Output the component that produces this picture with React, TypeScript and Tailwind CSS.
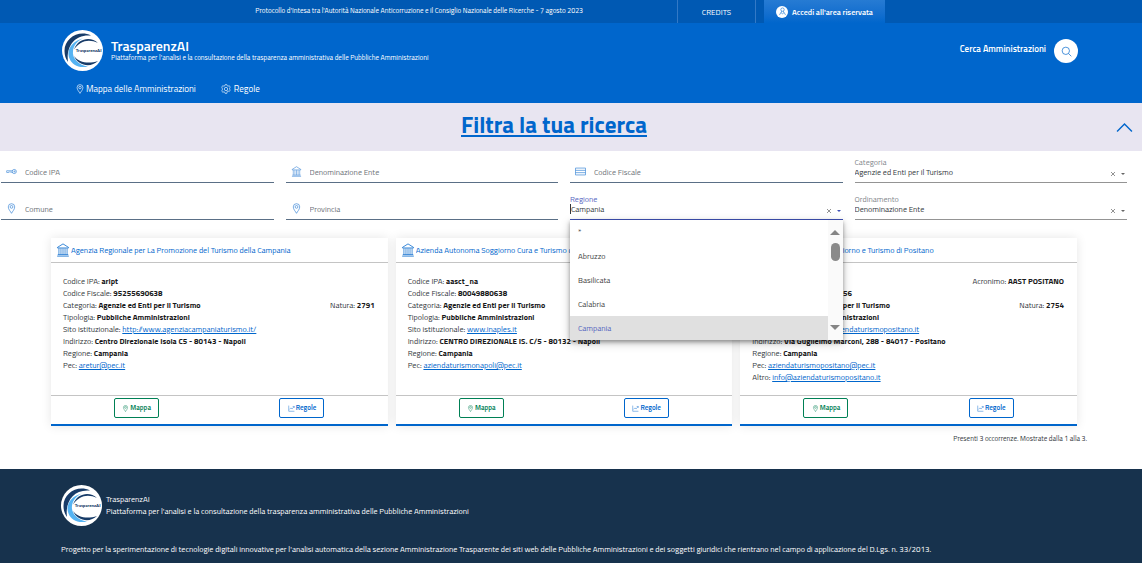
import { useState } from "react";

const filters = [
  { id: "ipa", label: "Codice IPA", icon: "key" },
  { id: "denominazione", label: "Denominazione Ente", icon: "pa" },
  { id: "fiscale", label: "Codice Fiscale", icon: "card" },
];

const places = [
  { id: "comune", label: "Comune", icon: "pin" },
  { id: "provincia", label: "Provincia", icon: "pin" },
];

const regions = ["*", "Abruzzo", "Basilicata", "Calabria", "Campania"];

const agencies = [
  {
    name: "Agenzia Regionale per La Promozione del Turismo della Campania",
    ipa: "arlpt",
    fiscale: "95255690638",
    natura: "2791",
    site: "http://www.agenziacampaniaturismo.it/",
    address: "Centro Direzionale Isola C5 - 80143 - Napoli",
    pec: "aretur@pec.it",
  },
  {
    name: "Azienda Autonoma Soggiorno Cura e Turismo di Napoli",
    ipa: "aasct_na",
    fiscale: "80049880638",
    natura: "2754",
    site: "www.inaples.it",
    address: "CENTRO DIREZIONALE IS. C/5 - 80132 - Napoli",
    pec: "aziendaturismonapoli@pec.it",
  },
  {
    name: "Azienda Autonoma Soggiorno e Turismo di Positano",
    ipa: "aast_po",
    acronym: "AAST POSITANO",
    fiscale: "80020640656",
    natura: "2754",
    site: "www.aziendaturismopositano.it",
    address: "Via Guglielmo Marconi, 288 - 84017 - Positano",
    pec: "aziendaturismopositano@pec.it",
    other: "info@aziendaturismopositano.it",
  },
];

const Icon = ({ name, className }: { name: string; className?: string }) => (
  <svg
    viewBox="0 0 24 24"
    fill="none"
    stroke="currentColor"
    strokeWidth="1.5"
    className={className}
    aria-hidden="true"
  >
    {name === "pin" && (
      <>
        <path d="M12 22.5C10 18.5 5 14 5 8.5a7 7 0 0 1 14 0C19 14 14 18.5 12 22.5z" />
        <circle cx="12" cy="8.5" r="3" />
      </>
    )}
    {name === "pa" && (
      <>
        <path d="M2.5 7.5 12 1.5l9.5 6v1h-19zM2 22.5h20M3 20h18" strokeWidth="1.3" />
        <path d="M5 9v11M8.5 9v11M12 9v11M15.5 9v11M19 9v11" strokeWidth="1.2" />
      </>
    )}
    {name === "card" && <path d="M1 4.5h22v15H1zM1 9.5h22M1 14.5h22" />}
    {name === "key" && (
      <>
        <path d="M14 10.5H4a2 2 0 1 0 0 3.5h2l1.5-1.5L9 14l1.5-1.5L12 14h2" />
        <circle cx="18" cy="12" r="4.5" />
        <circle cx="18.5" cy="12" r="1.2" />
      </>
    )}
    {name === "gear" && (
      <>
        <path d="M10 1.5h4l.8 2.8 2.3 1 2.7-1.400 2.3 3.600-1.500 2.300v2.400l1.500 2.300-2.300 3.700-2.700-1.400-2.300 1L14 22.500h-4l-.8-2.800-2.300-1-2.700 1.400-2.300-3.700 1.500-2.300v-2.400L1.900 7.500l2.300-3.600 2.700 1.400 2.300-1z" />
        <circle cx="12" cy="12" r="4" />
      </>
    )}
    {name === "chart" && <path d="M2.5 2v19.5H22M5 15l5-5 4 3.5 7-8M16 5h5.500v5" />}
    {name === "search" && (
      <>
        <circle cx="10.5" cy="10.5" r="8" />
        <path d="m16.5 16.5 6 6" />
      </>
    )}
    {name === "user" && (
      <>
        <circle cx="12" cy="7" r="4.5" />
        <path d="M10 11 4 21M14 11l6 10M8 15l4 3 4-3" />
      </>
    )}
    {name === "up" && <path d="m1.5 17.5 10.5-10.5 10.5 10.5" strokeWidth="2" />}
  </svg>
);

const Logo = () => (
  <svg viewBox="0 0 41 41" className="size-[41px] shrink-0" aria-hidden="true">
    <circle cx="20.5" cy="20.5" r="20.5" fill="#fff" />
    <path d="M29 5.5C17-.5 2.5 8 2.5 21c0 4 1.2 8 3.500 11C4 17 12 4 29 5.500z" fill="#173b68" />
    <path d="M21 8.5C10 11 4 20 7.500 28.500 10 35 17 38.500 26 36.500 16 35 10 28 11 21c.5-5 4-10 10-12.500z" fill="#55b3f2" />
    <path d="M36 13C29 6 16 8 12 19.5 18 10.500 27 8.500 36 13z" fill="#173b68" />
    <path d="M12 26c4 10 17 12 24 5-9 3-19 2-24-5z" fill="#173b68" />
    <text x="39.5" y="22" textAnchor="end" fontSize="4.4" fontWeight="900" fill="#173b68" fontFamily="Lato, sans-serif">
      TrasparenzAI
    </text>
  </svg>
);

const TextFilter = ({ id, label, icon }: { id: string; label: string; icon: string }) => (
  <div className="flex h-8 items-center gap-2 border-b border-[#5a6f86] px-[5px] pt-[10px]">
    <Icon name={icon} className="size-[11px] shrink-0 text-[#3b86d6]" />
    <input
      id={id}
      aria-label={label}
      placeholder={label}
      className="w-full min-w-0 outline-none placeholder:text-[#6d7278]"
    />
  </div>
);

const SelectFilter = ({ id, label, value }: { id: string; label: string; value: string }) => (
  <div className="relative h-8 border-b border-[#949494] pt-[6px]">
    <label htmlFor={id} className="block leading-[10px] text-[#83878c]">
      {label}
    </label>
    <select id={id} className="block w-full appearance-none leading-[10px] text-[#33383d] outline-none">
      <option>{value}</option>
    </select>
    <FieldMarks />
  </div>
);

const FieldMarks = ({ active }: { active?: boolean }) => (
  <span className="absolute right-[2px] bottom-[6px] flex items-center gap-[6px]">
    <button type="button" aria-label="Cancella" className="text-[#777]">
      <svg viewBox="0 0 4 4" className="block size-1" stroke="currentColor" strokeWidth=".8">
        <path d="m0 0 4 4M4 0 0 4" />
      </svg>
    </button>
    <svg viewBox="0 0 4 2" className={active ? "h-[2px] w-1 text-[#3f51b5]" : "h-[2px] w-1 text-[#666]"} fill="currentColor">
      <path d="M0 0h4L2 2z" />
    </svg>
  </span>
);

const RegionFilter = () => {
  const [value, setValue] = useState("Campania");

  return (
    <div className="relative h-8 border-b border-[#3f51b5] pt-[6px]">
      <label htmlFor="regione" className="block leading-[10px] text-[#5566bf]">
        Regione
      </label>
      <input
        id="regione"
        role="combobox"
        aria-expanded="true"
        aria-controls="regione-list"
        value={value}
        onChange={(e) => setValue(e.target.value)}
        className="block h-[10px] w-full border-l border-[#33383d] text-[#33383d] outline-none"
      />
      <FieldMarks active />
      <div className="absolute top-8 right-0 left-0 z-10 flex h-[120px] bg-white shadow-[0_2px_4px_rgba(0,0,0,.35),0_3px_10px_rgba(0,0,0,.2)]">
        <ul id="regione-list" role="listbox" aria-label="Regione" className="flex-1">
          {regions.map((region) => (
            <li
              key={region}
              role="option"
              aria-selected={region === value}
              onClick={() => setValue(region)}
              className={
                region === value
                  ? "bg-[#e0e0e0] px-2 leading-6 text-[#5566bf]"
                  : "px-2 leading-6 text-[#444]"
              }
            >
              {region}
            </li>
          ))}
        </ul>
        <div className="flex w-[15px] flex-col items-center bg-[#fafafa] py-[10px]">
          <svg viewBox="0 0 10 5" className="h-[5px] w-[10px]" fill="#858585">
            <path d="M5 0 10 5H0z" />
          </svg>
          <div className="mt-2 h-[18px] w-[9px] rounded-full bg-[#8a8a8a]" />
          <svg viewBox="0 0 10 5" className="mt-auto h-[5px] w-[10px]" fill="#858585">
            <path d="M0 0h10L5 5z" />
          </svg>
        </div>
      </div>
    </div>
  );
};

const Row = ({ label, value }: { label: string; value: string }) => (
  <p>
    {label}: <strong className="font-bold text-[#19191a]">{value}</strong>
  </p>
);

const LinkRow = ({ label, value }: { label: string; value: string }) => (
  <p>
    {label}:{" "}
    <a href="#" className="text-[#0066cc] underline">
      {value}
    </a>
  </p>
);

const AgencyCard = ({ agency }: { agency: (typeof agencies)[number] }) => (
  <article className="flex flex-col border-b-2 border-[#0066cc] bg-white shadow-[0_0_10px_rgba(0,0,0,.1)]">
    <h3 className="flex h-[25px] items-center gap-px border-b border-[#c4c4c4] px-[5px] text-[#0066cc]">
      <Icon name="pa" className="size-[14px] shrink-0" />
      <a href="#" className="truncate">{agency.name}</a>
    </h3>
    <div className="min-h-[132px] flex-1 px-3 py-3 leading-3 text-[#33383d]">
      <div className="flex justify-between pr-px">
        <Row label="Codice IPA" value={agency.ipa} />
        {agency.acronym && <Row label="Acronimo" value={agency.acronym} />}
      </div>
      <Row label="Codice Fiscale" value={agency.fiscale} />
      <div className="flex justify-between pr-px">
        <Row label="Categoria" value="Agenzie ed Enti per il Turismo" />
        <Row label="Natura" value={agency.natura} />
      </div>
      <Row label="Tipologia" value="Pubbliche Amministrazioni" />
      <LinkRow label="Sito istituzionale" value={agency.site} />
      <Row label="Indirizzo" value={agency.address} />
      <Row label="Regione" value="Campania" />
      <LinkRow label="Pec" value={agency.pec} />
      {agency.other && <LinkRow label="Altro" value={agency.other} />}
    </div>
    <div className="grid grid-cols-2 justify-items-center border-t border-[#c4c4c4] px-[3px] pt-[2px] pb-[6px] text-[7px] font-semibold">
      <button type="button" className="flex h-5 w-[45px] items-center justify-center gap-px rounded-[2px] border border-[#008055] text-[#008055]">
        <Icon name="pin" className="size-[7px]" />
        Mappa
      </button>
      <button type="button" className="flex h-5 w-[45px] items-center justify-center gap-px rounded-[2px] border border-[#0066cc] text-[#0066cc]">
        <Icon name="chart" className="size-[7px]" />
        Regole
      </button>
    </div>
  </article>
);

export default function App() {
  return (
    <div className="flex min-h-screen flex-col bg-white font-['Titillium_Web','Lato',sans-serif] text-[8px]">
      <header className="bg-[#0066cc] text-white">
        <div className="flex h-[23px] justify-end bg-[#0059b3] pr-[257px]">
          <p className="mr-[94px] self-center text-[7px]">
            Protocollo d'Intesa tra l'Autorità Nazionale Anticorruzione e il Consiglio Nazionale delle Ricerche - 7 agosto 2023
          </p>
          <a href="#" className="flex w-[79px] items-center justify-center border-x border-[#3379c6]">
            CREDITS
          </a>
          <a href="#" className="ml-2 flex w-[121px] items-center justify-center gap-1 bg-linear-to-b from-[#267bd3] to-[#0066cc] font-semibold">
            <span className="flex size-3 items-center justify-center rounded-full bg-white">
              <Icon name="user" className="size-[9px] text-[#0066cc]" />
            </span>
            Accedi all'area riservata
          </a>
        </div>
        <div className="flex h-[54px] items-center justify-between pr-16 pl-[62px]">
          <div className="flex items-center gap-2">
            <Logo />
            <div>
              <h1 className="text-[14px] leading-4 font-semibold">TrasparenzAI</h1>
              <p className="text-[7px] leading-[8px]">
                Piattaforma per l'analisi e la consultazione della trasparenza amministrativa delle Pubbliche Amministrazioni
              </p>
            </div>
          </div>
          <div className="flex items-center gap-2 pt-[2px] text-[9px] font-semibold">
            <span className="pb-1">Cerca Amministrazioni</span>
            <button type="button" aria-label="Cerca" className="flex size-6 items-center justify-center rounded-full bg-white text-[#0066cc]">
              <Icon name="search" className="size-[11px]" />
            </button>
          </div>
        </div>
        <nav className="flex h-[26px] gap-[25px] pt-1 pb-[6px] pl-[75px] text-[9px] leading-3">
          <a href="#" className="flex items-center gap-px">
            <Icon name="pin" className="size-[10px]" />
            Mappa delle Amministrazioni
          </a>
          <a href="#" className="flex items-center gap-[3px]">
            <Icon name="gear" className="size-[10px]" />
            Regole
          </a>
        </nav>
      </header>

      <div className="flex h-12 items-center bg-[#e8e5f1] text-[#0066cc]">
        <h2 className="flex-1 pr-2 pb-[3px] text-center text-[23px] font-bold">
          <a href="#filtri" className="underline decoration-2 underline-offset-2">Filtra la tua ricerca</a>
        </h2>
        <button type="button" aria-label="Chiudi filtri" className="mr-[9px]">
          <Icon name="up" className="size-[17px]" />
        </button>
      </div>

      <main className="pr-[15px]">
        <form id="filtri" className="grid grid-cols-4 gap-x-3 gap-y-[5px] pl-px">
          {filters.map((filter) => (
            <TextFilter key={filter.id} {...filter} />
          ))}
          <SelectFilter id="categoria" label="Categoria" value="Agenzie ed Enti per il Turismo" />
          {places.map((filter) => (
            <TextFilter key={filter.id} {...filter} />
          ))}
          <RegionFilter />
          <SelectFilter id="ordinamento" label="Ordinamento" value="Denominazione Ente" />
        </form>
        <section className="grid grid-cols-3 gap-2 pt-[18px] pr-[50px] pl-[51px]">
          {agencies.map((agency) => (
            <AgencyCard key={agency.name} agency={agency} />
          ))}
        </section>
        <p className="mr-10 pt-[7px] text-right text-[7px] leading-3 text-[#33383d]">
          Presenti 3 occorrenze. Mostrate dalla 1 alla 3.
        </p>
      </main>

      <footer className="mt-6 flex-1 bg-[#17324d] px-[61px] pt-4 text-white">
        <div className="flex items-center gap-1">
          <Logo />
          <p className="pb-[2px] leading-3">
            TrasparenzAI
            <br />
            Piattaforma per l'analisi e la consultazione della trasparenza amministrativa delle Pubbliche Amministrazioni
          </p>
        </div>
        <p className="pt-[17px] leading-3">
          Progetto per la sperimentazione di tecnologie digitali innovative per l'analisi automatica della sezione Amministrazione Trasparente dei siti web delle Pubbliche Amministrazioni e dei soggetti giuridici che rientrano nel campo di applicazione del D.Lgs. n. 33/2013.
        </p>
      </footer>
    </div>
  );
}
